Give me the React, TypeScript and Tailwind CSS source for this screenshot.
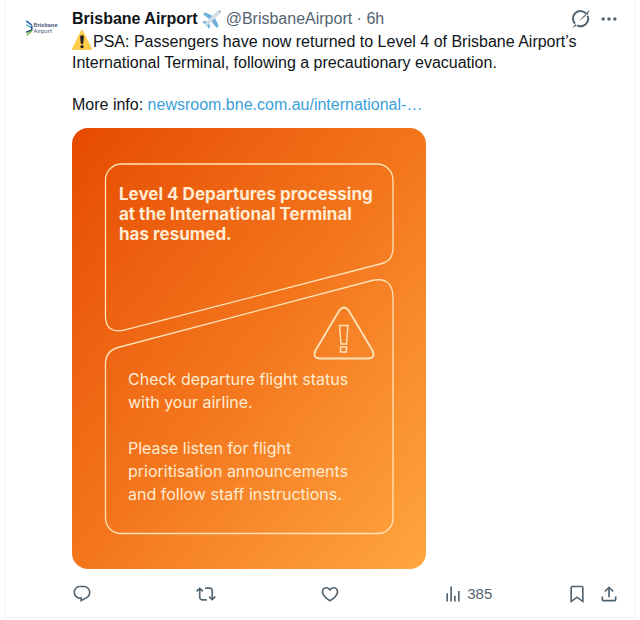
import React, { useState } from 'react';
import clsx from 'clsx';

const ICONS = {
  reply:
    'M1.751 10c0-4.42 3.584-8 8.005-8h4.366c4.49 0 8.129 3.64 8.129 8.13 0 2.96-1.607 5.68-4.196 7.11l-8.054 4.46v-3.69h-.067c-4.49.1-8.183-3.51-8.183-8.01zm8.005-6c-3.317 0-6.005 2.69-6.005 6 0 3.37 2.77 6.08 6.138 6.01l.351-.01h1.761v2.3l5.087-2.81c1.951-1.08 3.163-3.13 3.163-5.36 0-3.39-2.744-6.13-6.129-6.13H9.756z',
  repost:
    'M4.5 3.88l4.432 4.14-1.364 1.46L5.5 7.55V16c0 1.1.896 2 2 2H13v2H7.5c-2.209 0-4-1.79-4-4V7.55L1.432 9.48.068 8.02 4.5 3.88zM16.5 6H11V4h5.5c2.209 0 4 1.79 4 4v8.45l2.068-1.93 1.364 1.46-4.432 4.14-4.432-4.14 1.364-1.46 2.068 1.93V8c0-1.1-.896-2-2-2z',
  like:
    'M16.697 5.5c-1.222-.06-2.679.51-3.89 2.16l-.805 1.09-.806-1.09C9.984 6.01 8.526 5.44 7.304 5.5c-1.243.07-2.349.78-2.91 1.91-.552 1.12-.633 2.78.479 4.82 1.074 1.97 3.257 4.27 7.129 6.61 3.87-2.34 6.052-4.64 7.126-6.61 1.111-2.04 1.03-3.7.477-4.82-.561-1.13-1.666-1.84-2.908-1.91zm4.187 7.69c-1.351 2.48-4.001 5.12-8.379 7.67l-.503.3-.504-.3c-4.379-2.55-7.029-5.19-8.382-7.67-1.36-2.5-1.41-4.86-.514-6.67.887-1.79 2.647-2.91 4.601-3.01 1.651-.09 3.368.56 4.798 2.01 1.429-1.45 3.146-2.1 4.796-2.01 1.954.1 3.714 1.22 4.601 3.01.896 1.81.846 4.17-.514 6.67z',
  views: 'M8.75 21V3h2v18h-2zM18 21V8.5h2V21h-2zM4 21l.004-10h2L6 21H4zm9.248 0v-7h2v7h-2z',
  bookmark:
    'M4 4.5C4 3.12 5.119 2 6.5 2h11C18.881 2 20 3.12 20 4.5v18.44l-8-5.71-8 5.71V4.5zM6.5 4c-.276 0-.5.22-.5.5v14.56l6-4.29 6 4.29V4.5c0-.28-.224-.5-.5-.5h-11z',
  share:
    'M12 2.59l5.7 5.7-1.41 1.42L13 6.41V16h-2V6.41l-3.3 3.3-1.41-1.42L12 2.59zM21 15l-.02 3.51c0 1.38-1.12 2.49-2.5 2.49H5.5C4.11 21 3 19.88 3 18.5V15h2v3.5c0 .28.22.5.5.5h12.98c.28 0 .5-.22.5-.5L19 15h2z',
  more:
    'M3 12c0-1.1.9-2 2-2s2 .9 2 2-.9 2-2 2-2-.9-2-2zm9 2c1.1 0 2-.9 2-2s-.9-2-2-2-2 .9-2 2 .9 2 2 2zm7 0c1.1 0 2-.9 2-2s-.9-2-2-2-2 .9-2 2 .9 2 2 2z',
};

function Icon({ name }: { name: keyof typeof ICONS }) {
  return (
    <svg viewBox="0 0 24 24" className="w-5 h-5 shrink-0" fill="currentColor" aria-hidden="true">
      <path d={ICONS[name]} />
    </svg>
  );
}

function GrokIcon() {
  return (
    <svg viewBox="0 0 24 24" className="w-5 h-5 shrink-0" fill="none" aria-hidden="true">
      <path d="M4.9 17.6A8.9 8.9 0 0 1 17.6 5.1" stroke="currentColor" strokeWidth="2.4" />
      <path d="M19.8 8.2A8.9 8.9 0 0 1 7.4 19.6" stroke="currentColor" strokeWidth="2.4" />
      <path d="M22.6 1 9.2 14.6l7.4-5.4z" fill="currentColor" />
      <path d="M1.4 23c1.2-1.7 2.2-3 3.6-4.6l2.2 1.2C5 20.8 3.2 21.8 1.4 23z" fill="currentColor" />
      <path d="M22.6 1c-1.5 2.3-2.2 4-2.7 6.9l-2.3-2.6z" fill="currentColor" />
    </svg>
  );
}

function PlaneEmoji() {
  return (
    <svg viewBox="0 0 36 36" className="w-5 h-5 shrink-0" role="img" aria-label="airplane">
      <path fill="#6fb2dc" d="M22 14 7 6.5c-1-.5-2.200-.3-3 .5L2.500 8.500c-.7.700-.6 1.500.3 2L15 20zM22 14l7.500 15c.5 1 .3 2.200-.5 3l-1.500 1.500c-.7.700-1.500.6-2-.3L16 21z" />
      <path fill="#6fb2dc" d="m12 23-7.500-1.500c-.8-.1-1.500.1-2 .6l-1 1c-.5.500-.4 1.200.3 1.500L9 29zM13 24l1.500 7.500c.1.800-.1 1.500-.6 2l-1 1c-.5.500-1.200.4-1.500-.3L7 27z" />
      <path fill="#d3dee6" d="M34 2c1.200 1.400.5 4-1.500 6.200L13 27c-2.500 2.200-6 3.800-7.500 2.800s.6-5 2.800-7.500L27.500 3.500C29.800 1.500 32.600.6 34 2z" />
      <path fill="#7790a0" d="M30 4c1-.5 2-.4 2.500.1s.6 1.500.1 2.500c-1.400-.3-2.300-1.200-2.600-2.600z" />
    </svg>
  );
}

function WarningEmoji() {
  return (
    <svg viewBox="0 0 36 36" className="inline-block w-5 h-5 mr-px align-text-bottom" role="img" aria-label="warning">
      <path fill="#ffcc4d" d="M2.7 36c-2.200 0-3.200-1.600-2.100-3.500L16 1.400c1-1.900 2.900-1.900 3.900 0l15.500 31.100c1 1.900 0 3.500-2.200 3.500z" />
      <path fill="#231f20" d="M14.6 12.800c0-2 1.500-3.200 3.400-3.200s3.400 1.200 3.400 3.200l-1.100 10.400c0 1.300-1 2.100-2.300 2.100s-2.300-.8-2.300-2.100z" />
      <circle cx="18" cy="30" r="2.8" fill="#231f20" />
    </svg>
  );
}

function Avatar() {
  return (
    <a href="#profile" className="flex items-center justify-center gap-px w-10 h-10 shrink-0 rounded-full bg-white">
      <svg viewBox="0 0 8 17" className="w-2 h-4 shrink-0" fill="none" aria-hidden="true">
        <path d="M1 1l6 4.5" stroke="#2f62b5" strokeWidth="1.8" />
        <path d="M1 5.2l6 3" stroke="#3aa6b9" strokeWidth="1.4" />
        <path d="M7 6v4.5L1 13" stroke="#2b4a78" strokeWidth="1.6" />
        <path d="M7 11.5 1.5 16" stroke="#7cc142" strokeWidth="1.8" />
      </svg>
      <span className="text-[6px] leading-[6px] text-[#4a5876] font-['Roboto',sans-serif]">
        <b className="block font-semibold">Brisbane</b>
        Airport
      </span>
    </a>
  );
}

function NoticeCard() {
  return (
    <section className="relative w-full max-w-[354px] rounded-2xl overflow-hidden bg-linear-to-br from-[#e64a00] via-[#f3751c] to-[#ffa640] text-[#ffecd2] pt-14 pb-[63px] pl-[47px] pr-2 font-['Inter',sans-serif]">
      {/* Outlined panels and the hazard sign behind the copy */}
      <svg
        viewBox="0 0 354 441"
        preserveAspectRatio="none"
        className="absolute inset-0 w-full h-full"
        fill="none"
        stroke="#ffe3b8"
        strokeWidth="1.3"
        aria-hidden="true"
      >
        <path d="M49 36H305a16 16 0 0 1 16 16V120Q321 132.500 310 135.500L52 202.200Q33.500 206 33.500 188V52A16 16 0 0 1 49 36z" />
        <path d="M46 219.500 300 152.500Q321 148 321 170V390a15 15 0 0 1-15 15.500H49a15.500 15.500 0 0 1-15.500-15.500V236Q33.500 223 46 219.500z" />
        <path d="M267 183q5-7 10 0l23.500 39.500q3.500 7.500-4.500 8H248q-8-.5-4.500-8z" strokeWidth="1.8" />
        <path d="M267.500 197.500h8.500l-1.500 18.500h-5.500zM268.500 219h6v5h-6z" strokeWidth="1.4" />
      </svg>

      <div className="relative">
        <h2 className="text-[17px] leading-5 font-bold">
          Level 4 Departures processing
          <br />
          at the International Terminal
          <br />
          has resumed.
        </h2>
        <div className="pl-[9px] pt-[124px] space-y-[23px] text-base leading-[23px]">
          <p>
            Check departure flight status
            <br />
            with your airline.
          </p>
          <p>
            Please listen for flight
            <br />
            prioritisation announcements
            <br />
            and follow staff instructions.
          </p>
        </div>
      </div>
    </section>
  );
}

export default function App() {
  const [liked, setLiked] = useState(false);
  const [saved, setSaved] = useState(false);

  return (
    <main className="bg-white min-h-screen px-1 font-['Liberation_Sans',sans-serif] text-base leading-[21px] text-[#0f1419]">
      <article className="flex gap-[11px] border-x border-b border-[#eff3f4] px-4 pt-2 pb-[13px]">
        <Avatar />

        <div className="flex-1 min-w-0">
          <header className="flex items-center justify-between">
            <div className="flex items-center gap-1 min-w-0">
              <a href="#profile" className="flex items-center gap-1 font-bold">
                Brisbane Airport
                <PlaneEmoji />
              </a>
              <span className="text-[#536471]">@BrisbaneAirport · 6h</span>
            </div>
            <div className="flex items-center gap-2 text-[#536471]">
              <button type="button" aria-label="Explain this post"><GrokIcon /></button>
              <button type="button" aria-label="More"><Icon name="more" /></button>
            </div>
          </header>

          <p className="pt-px">
            <WarningEmoji />PSA: Passengers have now returned to Level 4 of Brisbane Airport’s International Terminal, following a precautionary evacuation.
          </p>
          <p className="pt-[21px] pb-[13px]">
            More info: <a href="#newsroom" className="text-[#3a9fd8]">newsroom.bne.com.au/international-…</a>
          </p>

          <NoticeCard />

          <div className="flex items-center pt-[14px] text-[#536471]">
            <button type="button" aria-label="Reply" className="flex flex-1"><Icon name="reply" /></button>
            <button type="button" aria-label="Repost" className="flex flex-1"><Icon name="repost" /></button>
            <button
              type="button"
              aria-label="Like"
              onClick={() => setLiked(!liked)}
              className={clsx("flex flex-1", liked && "text-[#f91880]")}
            >
              <Icon name="like" />
            </button>
            <button type="button" aria-label="Views" className="flex flex-1 items-center gap-1 text-[15px]">
              <Icon name="views" />
              385
            </button>
            <div className="flex gap-3">
              <button
                type="button"
                aria-label="Bookmark"
                onClick={() => setSaved(!saved)}
                className={clsx(saved && "text-[#1d9bf0]")}
              >
                <Icon name="bookmark" />
              </button>
              <button type="button" aria-label="Share"><Icon name="share" /></button>
            </div>
          </div>
        </div>
      </article>
    </main>
  );
}
